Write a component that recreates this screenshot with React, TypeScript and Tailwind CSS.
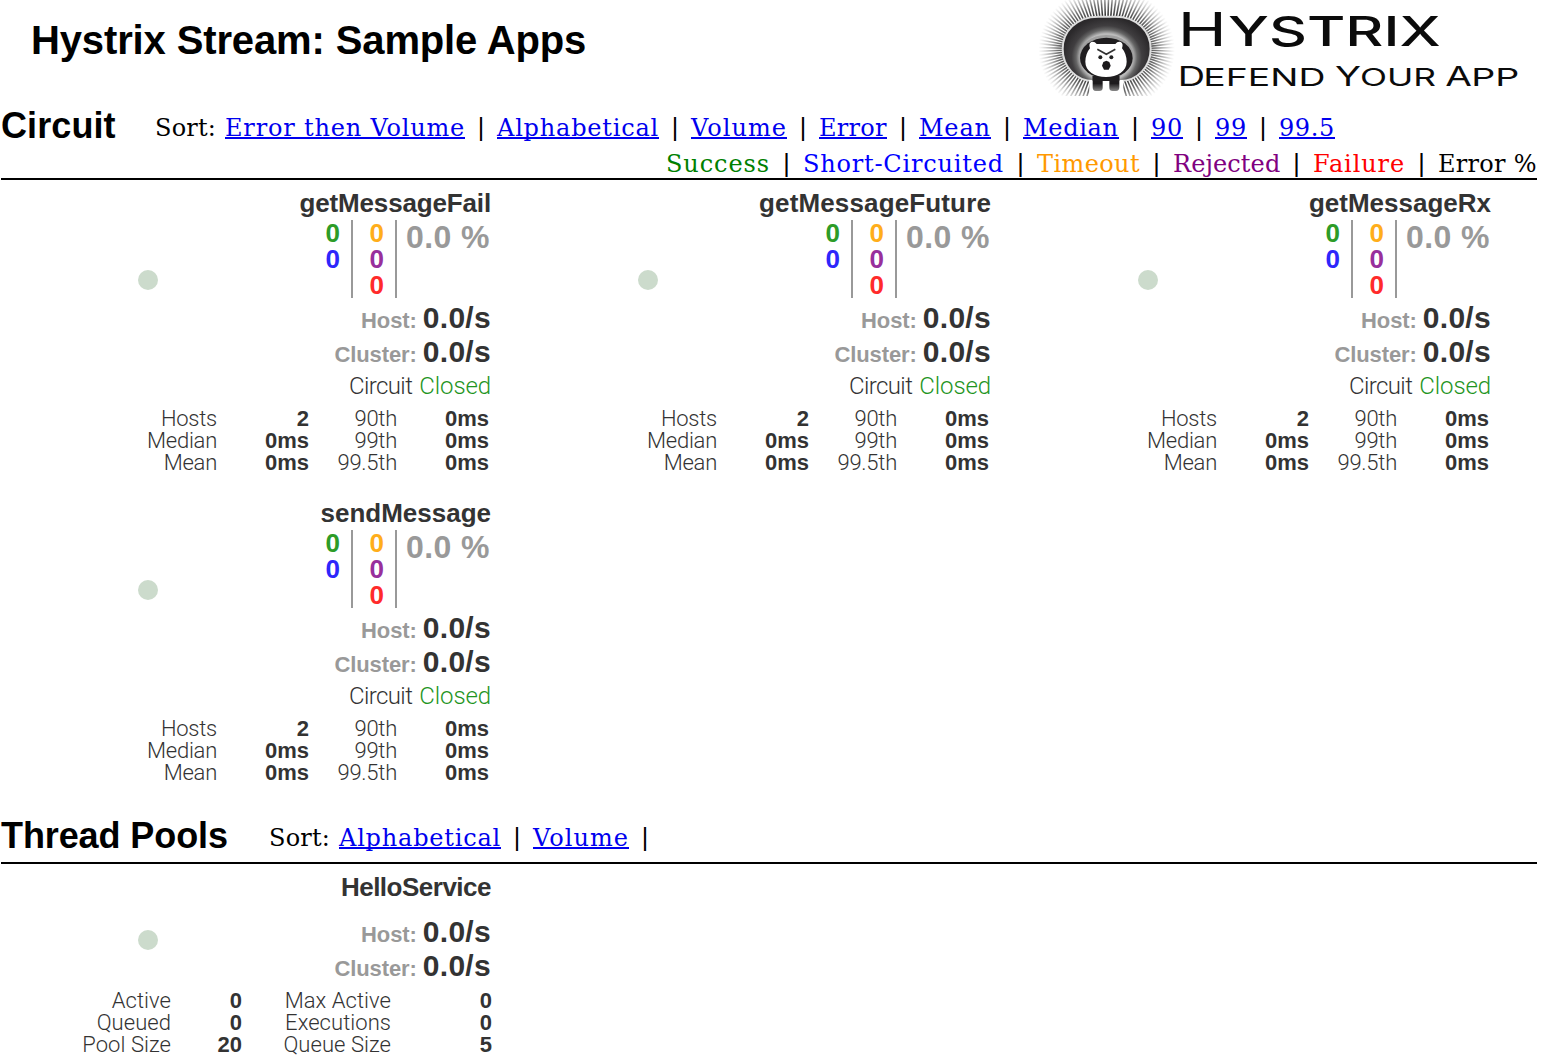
type Item = { label: string; cls: string };

const circuitSorts: Item[] = [
  { label: 'Error then Volume', cls: 'w-[240px] tracking-[0.82px]' },
  { label: 'Alphabetical', cls: 'w-[162px] tracking-[0.8px]' },
  { label: 'Volume', cls: 'w-[96px] tracking-[1.05px]' },
  { label: 'Error', cls: 'w-[68px] tracking-[0.3px]' },
  { label: 'Mean', cls: 'w-[72px] tracking-[0.8px]' },
  { label: 'Median', cls: 'w-[96px] tracking-[0.7px]' },
  { label: '90', cls: 'w-[32px] tracking-[0.7px]' },
  { label: '99', cls: 'w-[32px] tracking-[0.7px]' },
  { label: '99.5', cls: 'w-[56px] tracking-[0.6px]' },
];

const poolSorts: Item[] = [
  { label: 'Alphabetical', cls: 'w-[162px] tracking-[0.8px]' },
  { label: 'Volume', cls: 'w-[96px] tracking-[1.05px]' },
];

const legend: Item[] = [
  { label: 'Success', cls: 'w-[104px] tracking-[0.9px] text-[#008000]' },
  { label: 'Short-Circuited', cls: 'w-[201px] tracking-[0.8px] text-[#0000ff]' },
  { label: 'Timeout', cls: 'w-[103px] tracking-[0.4px] text-[#ff9900]' },
  { label: 'Rejected', cls: 'w-[107px] tracking-[0.1px] text-[#800080]' },
  { label: 'Failure', cls: 'w-[92px] tracking-[0.88px] text-[#ff0000]' },
  { label: 'Error %', cls: 'w-[99px] tracking-[0.3px] text-black' },
];

function Bar({ cls }: { cls: string }) {
  return <span className={`block shrink-0 text-center text-[25px] leading-7 font-['Liberation_Sans',sans-serif] ${cls}`}>|</span>;
}

function SortLinks({ items, trailing }: { items: Item[]; trailing?: boolean }) {
  return (
    <div className="flex h-7 text-[24px] leading-[30px] whitespace-nowrap font-['DejaVu_Serif',serif]">
      <span className="w-[70px] tracking-[0.2px]">Sort:</span>
      {items.map((s, i) => (
        <div key={s.label} className="flex">
          <a href="#" className={`block h-[26px] border-b-2 border-[#0000ee] text-[#0000ee] ${s.cls}`}>{s.label}</a>
          {(i < items.length - 1 || trailing) && <Bar cls="w-8" />}
        </div>
      ))}
    </div>
  );
}

function Rates() {
  return (
    <>
      {['Host:', 'Cluster:'].map((l) => (
        <div key={l} className="flex h-[34px] items-baseline justify-end">
          <span className="mr-[6px] text-[22px] leading-[34px] tracking-[-0.1px] text-[#999]">{l}</span>
          <span className="text-[30px] leading-[34px] tracking-[0.3px]">0.0/s</span>
        </div>
      ))}
    </>
  );
}

const light = "font-['Roboto',sans-serif] font-light";

function Stats({ rows, cols, track }: { rows: string[][]; cols: string; track: string }) {
  return (
    <div className={`grid text-right text-[22px] leading-[22px] ${cols}`}>
      {rows.flat().map((c, i) => (
        <span key={i} className={i % 2 ? '' : `${light} ${track}`}>{c}</span>
      ))}
    </div>
  );
}

const cardBase = "w-[500px] pt-[10px] text-[#333] font-bold font-['Liberation_Sans',sans-serif] whitespace-nowrap";

function CircuitCard({ name, cls }: { name: string; cls: string }) {
  return (
    <section className={`${cardBase} h-[310px]`}>
      <div className="flex">
        <div className="mt-20 ml-[138px] size-5 shrink-0 rounded-full bg-[#ccdbcc]" />
        <div className="flex-1 pr-[9px]">
          <h3 className={`text-right text-[26px] leading-[26px] ${cls}`}>{name}</h3>
          <div className="mt-1 flex h-[78px] justify-end text-[26px] leading-[26px]">
            <div className="flex flex-col pr-[11px] text-right">
              <span className="text-[#2d9c27]">0</span>
              <span className="text-[#2d27fb]">0</span>
            </div>
            <div className="flex w-[46px] flex-col border-x-2 border-[#999] pr-[11px] text-right">
              <span className="text-[#ffae1b]">0</span>
              <span className="text-[#98309c]">0</span>
              <span className="text-[#ff2b2b]">0</span>
            </div>
            <span className="mt-px w-[94px] pl-[9px] text-[32px] leading-8 tracking-[0.4px] text-[#999]">0.0 %</span>
          </div>
          <div className="mt-[3px]"><Rates /></div>
          <div className={`mt-[5px] flex justify-end gap-[7px] text-2xl leading-6 ${light}`}>
            <span className="tracking-[-0.6px]">Circuit</span>
            <span className="tracking-[-0.1px] text-[#1f951f]">Closed</span>
          </div>
        </div>
      </div>
      <div className="mt-[10px]">
        <Stats
          track="tracking-[-0.25px]"
          cols="grid-cols-[217px_92px_88px_92px]"
          rows={[['Hosts', '2', '90th', '0ms'], ['Median', '0ms', '99th', '0ms'], ['Mean', '0ms', '99.5th', '0ms']]}
        />
      </div>
    </section>
  );
}

function PoolCard() {
  return (
    <section className={cardBase}>
      <div className="flex">
        <div className="mt-14 ml-[138px] size-5 shrink-0 rounded-full bg-[#ccdbcc]" />
        <div className="flex-1 pr-[9px]">
          <h3 className="text-right text-[26px] leading-[26px] tracking-[-0.5px]">HelloService</h3>
          <div className="mt-[15px]"><Rates /></div>
        </div>
      </div>
      <div className="mt-[7px]">
        <Stats
          track="tracking-[0.05px]"
          cols="grid-cols-[171px_71px_149px_101px]"
          rows={[['Active', '0', 'Max Active', '0'], ['Queued', '0', 'Executions', '0'], ['Pool Size', '20', 'Queue Size', '5']]}
        />
      </div>
    </section>
  );
}

const RAYS = 100;

function Logo() {
  const rays = Array.from({ length: RAYS }, (_, i) => {
    const a = ((i + 0.5) / RAYS) * Math.PI * 2;
    const c = Math.cos(a), s = Math.sin(a);
    return { a, x1: 230 + 128 * c, y1: 148 + 94 * s, x2: 230 + 205 * c, y2: 148 + 185 * s };
  }).filter((r) => Math.abs(r.a - Math.PI / 2) > 0.3);
  return (
    <svg width="511" height="96" viewBox="0 0 1533 288" className="block shrink-0">
      <defs>
        <radialGradient id="ray" gradientUnits="userSpaceOnUse" cx="230" cy="150" r="205" gradientTransform="translate(0 10) scale(1 0.93)">
          <stop offset="0.5" stopColor="#222" />
          <stop offset="0.72" stopColor="#444" stopOpacity="0.75" />
          <stop offset="1" stopColor="#888" stopOpacity="0" />
        </radialGradient>
        <radialGradient id="body" gradientUnits="userSpaceOnUse" cx="230" cy="172" r="135" gradientTransform="translate(0 17) scale(1 0.9)">
          <stop offset="0.58" stopColor="#bbb" />
          <stop offset="0.68" stopColor="#666" />
          <stop offset="0.78" stopColor="#403e40" />
          <stop offset="1" stopColor="#2b292b" />
        </radialGradient>
        <linearGradient id="leg" x1="0" y1="0" x2="0" y2="1">
          <stop offset="0.5" stopColor="#1d1b1d" />
          <stop offset="1" stopColor="#888" />
        </linearGradient>
      </defs>
      <g stroke="url(#ray)" strokeWidth="4.6">
        {rays.map((r, i) => <line key={i} x1={r.x1} y1={r.y1} x2={r.x2} y2={r.y2} />)}
      </g>
      <path d="M205 50 H255 C322 50 362 95 362 147 C362 200 322 243 270 243 H190 C138 243 98 200 98 147 C98 95 138 50 205 50Z" fill="url(#body)" stroke="#dcdcdc" strokeWidth="6" />
      <ellipse cx="229" cy="168" rx="83" ry="63" fill="#a0a0a0" />
      <ellipse cx="229" cy="174" rx="79" ry="61" fill="#1f1d1f" />
      <path d="M178 240 H280 V288 H178Z" fill="#fff" />
      <path d="M188 228 H218 V264 Q218 273 208 273 H197 Q188 273 188 262Z M238 228 H268 V262 Q268 273 258 273 H248 Q238 273 238 264Z" fill="url(#leg)" />
      <path d="M188 228 H268 V243 H188Z" fill="#1f1d1f" />
      <path d="M180 145 Q175 130 184 126 Q194 124 200 132 H256 Q262 124 272 126 Q281 130 276 145 Q289 160 290 185 C290 214 262 231 228 231 C194 231 166 214 166 185 Q167 160 180 145Z" fill="#fff" />
      <path d="M202 148 L229 163 L256 148" fill="none" stroke="#333" strokeWidth="5" />
      <circle cx="211" cy="172" r="6" fill="#222" />
      <circle cx="244" cy="172" r="6" fill="#222" />
      <path d="M220 186 L229 182 L238 186 L242 197 L236 209 H222 L216 197Z" fill="#1b191b" />
      <g fill="#0b0b0b" className="font-['Inter',sans-serif]">
        <text x="443" y="137" fontSize="141" textLength="147" lengthAdjust="spacingAndGlyphs" className="font-normal">H</text>
        <text x="594" y="137" fontSize="121" textLength="638" lengthAdjust="spacingAndGlyphs" className="font-medium">YSTRIX</text>
        <text x="443" y="258" fontSize="82" textLength="82" lengthAdjust="spacingAndGlyphs">D</text>
        <text x="520" y="258" fontSize="72" textLength="366" lengthAdjust="spacingAndGlyphs">EFEND</text>
        <text x="915" y="258" fontSize="82" textLength="78" lengthAdjust="spacingAndGlyphs">Y</text>
        <text x="990" y="258" fontSize="72" textLength="228" lengthAdjust="spacingAndGlyphs">OUR</text>
        <text x="1246" y="258" fontSize="82" textLength="80" lengthAdjust="spacingAndGlyphs">A</text>
        <text x="1324" y="258" fontSize="72" textLength="144" lengthAdjust="spacingAndGlyphs">PP</text>
      </g>
    </svg>
  );
}

const heading = "font-bold font-['Liberation_Sans',sans-serif] text-black whitespace-nowrap";

export default function App() {
  return (
    <main className="h-[1059px] w-[1541px] overflow-hidden bg-white text-black">
      <header className="flex h-[107px] justify-between">
        <h1 className={`mt-5 ml-[31px] text-[40px] leading-10 tracking-[-0.13px] ${heading}`}>Hystrix Stream: Sample Apps</h1>
        <Logo />
      </header>

      <div className="mr-1 ml-px h-[73px] border-b-2 border-black">
        <div className="flex h-[42px]">
          <h2 className={`w-[154px] text-4xl leading-[38px] tracking-[0.1px] ${heading}`}>Circuit</h2>
          <div className="mt-1.5"><SortLinks items={circuitSorts} /></div>
        </div>
        <div className="flex h-7 justify-end text-[24px] leading-[30px] whitespace-nowrap font-['DejaVu_Serif',serif]">
          {legend.map((l, i) => (
            <div key={l.label} className="flex">
              {i > 0 && <Bar cls="w-[33px]" />}
              <span className={l.cls}>{l.label}</span>
            </div>
          ))}
        </div>
      </div>

      <div className="flex h-[637px] w-[1500px] flex-wrap content-start">
        <CircuitCard name="getMessageFail" cls="tracking-[-0.15px]" />
        <CircuitCard name="getMessageFuture" cls="tracking-[0.14px]" />
        <CircuitCard name="getMessageRx" cls="" />
        <CircuitCard name="sendMessage" cls="" />
      </div>

      <div className="mr-1 ml-px flex h-[47px] border-b-2 border-black">
        <h2 className={`w-[268px] text-4xl leading-[38px] tracking-[-0.1px] ${heading}`}>Thread Pools</h2>
        <div className="mt-1.5"><SortLinks items={poolSorts} trailing /></div>
      </div>
      <PoolCard />
    </main>
  );
}
